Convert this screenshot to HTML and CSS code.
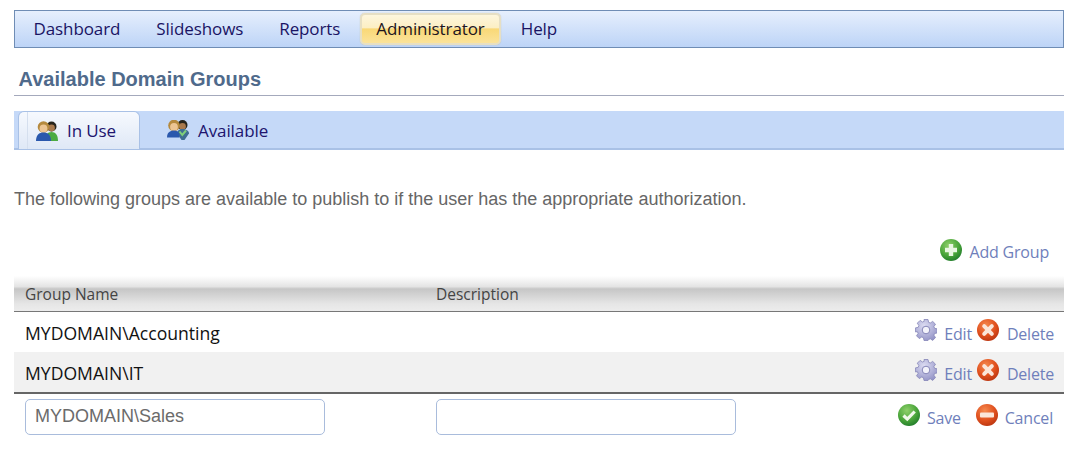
FILE: index.html
```html
<!DOCTYPE html>
<html lang="en">
<head>
<meta charset="utf-8">
<title>Available Domain Groups</title>
<link rel="stylesheet" href="styles.css">
</head>
<body>
<svg class="defs" width="0" height="0" aria-hidden="true">
  <defs>
    <radialGradient id="gGreen" cx="40%" cy="30%" r="75%"><stop offset="0" stop-color="#8fd06a"/><stop offset=".6" stop-color="#4aa53a"/><stop offset="1" stop-color="#1f7a2a"/></radialGradient>
    <radialGradient id="gRed" cx="40%" cy="30%" r="75%"><stop offset="0" stop-color="#f58a50"/><stop offset=".6" stop-color="#e0501e"/><stop offset="1" stop-color="#b93410"/></radialGradient>
    <radialGradient id="gGear" cx="40%" cy="30%" r="80%"><stop offset="0" stop-color="#dcdcf2"/><stop offset="1" stop-color="#8f8fc4"/></radialGradient>
    <symbol id="i-add" viewBox="0 0 22 22"><circle cx="11" cy="11" r="11" fill="url(#gGreen)"/><path d="M11 5v12M5 11h12" stroke="#e9f6e2" stroke-width="4.400"/></symbol>
    <symbol id="i-del" viewBox="0 0 22 22"><circle cx="11" cy="11" r="11" fill="url(#gRed)"/><path d="M7.200 7.200l7.600 7.600M14.800 7.200l-7.600 7.600" stroke="#fbe6da" stroke-width="4" stroke-linecap="round"/></symbol>
    <symbol id="i-save" viewBox="0 0 22 22"><circle cx="11" cy="11" r="11" fill="url(#gGreen)"/><path d="M5.500 11.500l3.800 3.600 7.400-7.600" fill="none" stroke="#f1f9ea" stroke-width="3.200"/></symbol>
    <symbol id="i-cancel" viewBox="0 0 22 22"><circle cx="11" cy="11" r="11" fill="url(#gRed)"/><rect x="4" y="8.600" width="14" height="4.800" rx="1" fill="#fbe6da"/></symbol>
    <symbol id="i-gear" viewBox="0 0 22 22"><path fill="url(#gGear)" stroke="#8585b8" stroke-width=".8" d="M9 .5h4l.6 2.800 1.700.7 2.400-1.600 2.800 2.800-1.600 2.400.7 1.700 2.800.6v4l-2.800.6-.7 1.700 1.600 2.400-2.800 2.800-2.400-1.600-1.700.7L13 21.500H9l-.6-2.800-1.700-.7-2.400 1.600-2.800-2.800 1.600-2.400-.7-1.700L.4 12.900v-4l2.800-.6.7-1.700-1.600-2.400 2.800-2.800 2.400 1.600 1.700-.7z"/><circle cx="11" cy="11" r="3.800" fill="#f3f3fb" stroke="#8585b8"/></symbol>
    <symbol id="i-users" viewBox="0 0 22 20"><circle cx="15.500" cy="5.500" r="5" fill="#26241c"/><circle cx="15.500" cy="7" r="3.400" fill="#a97a4e"/><path d="M9 20c0-6 2.500-9 6.500-9s6.500 3 6.500 9z" fill="#4cab42"/><circle cx="7.500" cy="6" r="5.800" fill="#b58a3e"/><circle cx="7.500" cy="7.500" r="3.900" fill="#ecc593"/><path d="M0 20c0-6 3-8.500 7.500-8.500S15 14 15 20z" fill="#2a58ad"/></symbol>
    <symbol id="i-usercheck" viewBox="0 0 22 20"><circle cx="15.500" cy="5" r="5" fill="#26241c"/><circle cx="15.500" cy="6.500" r="3.400" fill="#a97a4e"/><path d="M10 13.500c0-3 2.500-4.500 5.500-4.500s6.500 1.500 6.500 4.500L17.500 20h-3z" fill="#3f6e93"/><path d="M12.500 11.500l2.800 3.500 3.700-4.500" fill="none" stroke="#7fd07a" stroke-width="2"/><circle cx="7" cy="5.500" r="5.800" fill="#b58a3e"/><circle cx="7" cy="7" r="3.900" fill="#ecc593"/><path d="M0 17.500c0-5 3-7 7-7s5.500 2 5.500 7z" fill="#2a58ad"/></symbol>
  </defs>
</svg>
<div class="page">
  <nav class="menu">
    <a class="menu-item">Dashboard</a>
    <a class="menu-item">Slideshows</a>
    <a class="menu-item">Reports</a>
    <a class="menu-item active">Administrator</a>
    <a class="menu-item">Help</a>
  </nav>
  <h1 class="title">Available Domain Groups</h1>
  <div class="tabs">
    <a class="tab selected"><svg class="tab-icon"><use href="#i-users"/></svg>In Use</a>
    <a class="tab"><svg class="tab-icon"><use href="#i-usercheck"/></svg>Available</a>
  </div>
  <p class="intro">The following groups are available to publish to if the user has the appropriate authorization.</p>
  <div class="toolbar"><a class="action add"><svg class="ico"><use href="#i-add"/></svg>Add Group</a></div>
  <div class="grid">
    <div class="row head"><div>Group Name</div><div>Description</div><div></div></div>
    <div class="row"><div>MYDOMAIN\Accounting</div><div></div><div class="actions"><a class="action"><svg class="ico"><use href="#i-gear"/></svg>Edit</a><a class="action"><svg class="ico"><use href="#i-del"/></svg>Delete</a></div></div>
    <div class="row alt"><div>MYDOMAIN\IT</div><div></div><div class="actions"><a class="action"><svg class="ico"><use href="#i-gear"/></svg>Edit</a><a class="action"><svg class="ico"><use href="#i-del"/></svg>Delete</a></div></div>
    <div class="row edit"><div><input class="field" type="text" value="MYDOMAIN\Sales"></div><div><input class="field" type="text"></div><div class="actions wide"><a class="action"><svg class="ico"><use href="#i-save"/></svg>Save</a><a class="action"><svg class="ico"><use href="#i-cancel"/></svg>Cancel</a></div></div>
  </div>
</div>
</body>
</html>
```
FILE: styles.css
```css
* { box-sizing: border-box; }
html, body { margin: 0; padding: 0; background: #fff; }
body { font-family: "Open Sans", "Noto Sans", sans-serif; overflow: hidden; }
.defs { position: absolute; }
.page { width: 1050px; margin-left: 14px; padding-top: 10px; }

.menu { height: 38px; display: flex; align-items: center; padding-left: 1.500px; gap: 2px; border: 1px solid #6f8db5; background: linear-gradient(#e6effd, #bdd4f7); }
.menu-item { height: 32px; line-height: 30px; padding: 0 16px; font-size: 17px; letter-spacing: -.1px; color: #1a1464; border: 1px solid transparent; border-radius: 5px; }
.menu-item.active { margin: 0 1px; color: #1c1420; border: 2px solid #e6dfc4; background: linear-gradient(#fdf6dd 0, #fcefc4 45%, #f9d877 50%, #fbe39a 100%); line-height: 28px; padding: 0 14px; box-shadow: 0 0 1px #b8b39a; }

.title { margin: 0; height: 48px; padding: 20px 0 0 4.500px; font: bold 20px/22px "Liberation Sans", Arial, sans-serif; color: #4f6a8b; border-bottom: 1px solid #a4a9bc; }

.tabs { margin-top: 15px; height: 39px; display: flex; align-items: flex-end; padding-left: 4px; background: #c5d9f8; border-bottom: 2px solid #a9c1e6; }
.tab { display: flex; align-items: center; height: 37px; padding: 1px 23px 0 27px; font-size: 17px; letter-spacing: -.1px; color: #20146e; }
.tab.selected { height: 38px; margin-bottom: -1px; padding: 0 23px 0 17px; border: 1px solid #a9c1e6; border-bottom: 0; border-radius: 6px 6px 0 0; background: linear-gradient(90deg, transparent 8px, #d5dfee 8px, #d5dfee 9px, transparent 9px), linear-gradient(#f6f9fe, #dfe8f6); }
.tab-icon { width: 22px; height: 20px; margin-right: 9px; }

.intro { margin: 38px 0 0; font: 18px/22px "Liberation Sans", Arial, sans-serif; color: #666; }

.toolbar { display: flex; justify-content: flex-end; padding-right: 15px; margin-top: 28px; height: 28px; }
.action { display: inline-flex; align-items: center; color: #6f7fbb; font-size: 16px; letter-spacing: -.2px; white-space: nowrap; }
.ico { width: 22px; height: 22px; margin-right: 7px; margin-top: -5px; }
.add .ico { margin-right: 8px; }
.row .action { padding-top: 2px; }
.row .ico { margin-top: -7px; }

.grid { margin-top: 10px; }
.row { display: grid; grid-template-columns: 411px 1fr auto; align-items: center; padding: 1px 10px 0 11px; height: 40px; font-size: 17.600px; letter-spacing: 0; color: #111; }
.row.head { height: 36px; padding-top: 0; align-items: end; padding-bottom: 6px; font-size: 15.500px; color: #444; border-bottom: 1px solid #777; background: linear-gradient(#fff 0, #e4e4e4 30%, #c6c6c6 37%, #e6e6e6 80%, #ececec 100%); }
.row.alt { height: 42px; background: #f1f1f1; border-bottom: 2px solid #666; }
.row.edit { height: 46px; padding-top: 0; }
.actions { display: flex; gap: 5px; }
.actions .action:last-child .ico { margin-right: 8px; }
.actions.wide { gap: 15px; padding-right: 1px; }
.actions.wide .action:last-child .ico { margin-right: 7px; }
.field { display: block; width: 300px; height: 36px; padding: 0 9px 2px; font: 18px "Liberation Sans", Arial, sans-serif; letter-spacing: 0; color: #6b6b6b; background: #fff; border: 1px solid #a9bcdc; border-radius: 5px; }
```
